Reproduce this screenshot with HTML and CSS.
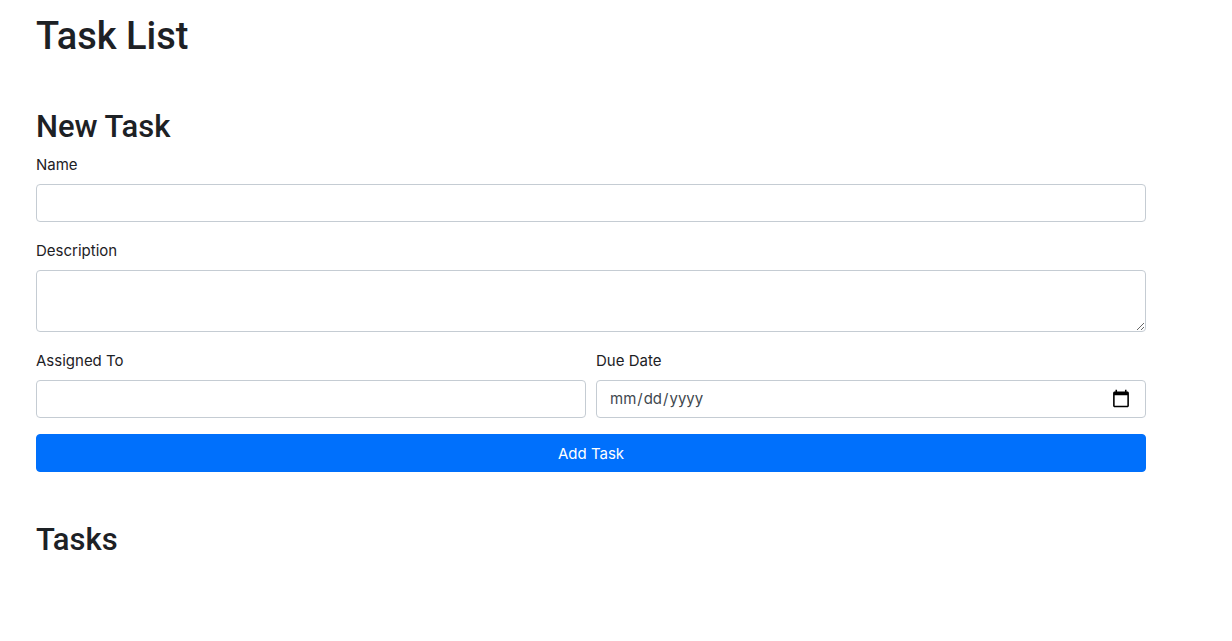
FILE: index.html
```html
<!DOCTYPE html>
<html lang="en">
<head>
<meta charset="utf-8">
<meta name="viewport" content="width=device-width, initial-scale=1">
<title>Task List</title>
<link rel="stylesheet" href="styles.css">
</head>
<body>
<main class="container">
  <h1 class="page-title">Task List</h1>
  <section class="new-task">
    <h2 class="section-title">New Task</h2>
    <form class="task-form">
      <div class="form-group">
        <label for="name">Name</label>
        <input class="form-control" type="text" id="name">
      </div>
      <div class="form-group">
        <label for="description">Description</label>
        <textarea class="form-control" id="description" rows="2"></textarea>
      </div>
      <div class="form-row">
        <div class="form-group">
          <label for="assigned">Assigned To</label>
          <input class="form-control" type="text" id="assigned">
        </div>
        <div class="form-group">
          <label for="due">Due Date</label>
          <input class="form-control" type="date" id="due">
        </div>
      </div>
      <button class="btn" type="submit">Add Task</button>
    </form>
  </section>
  <section class="tasks">
    <h2 class="section-title">Tasks</h2>
  </section>
</main>
</body>
</html>
```
FILE: styles.css
```css
*, *::before, *::after { box-sizing: border-box; }

body {
  margin: 0;
  background: #fff;
  color: #1d2125;
  font-family: Inter, "Liberation Sans", sans-serif;
  font-size: 15px;
  line-height: 24px;
}

.container {
  max-width: 1140px;
  margin: 0 auto 0 21px;
  padding: 11px 15px 0;
}

.page-title,
.section-title {
  font-family: Roboto, "Liberation Sans", sans-serif;
  font-weight: 500;
}

.page-title {
  margin: 0 0 46px;
  font-size: 38px;
  line-height: 50px;
}

.section-title {
  margin: 0 0 5px;
  font-size: 31px;
  line-height: 40px;
}

.form-group {
  flex: 1;
  margin-bottom: 16px;
}

.form-group label {
  display: block;
  margin-bottom: 6px;
  line-height: 26px;
}

.form-row {
  display: flex;
  gap: 10px;
}

.form-control {
  display: block;
  width: 100%;
  height: 38px;
  padding: 6px 12px;
  border: 1px solid #c5ccd3;
  border-radius: 4px;
  background: #fff;
  color: #41484e;
  font: inherit;
}

.form-control::-webkit-calendar-picker-indicator {
  width: 20px;
  height: 20px;
}

textarea.form-control {
  height: auto;
  resize: vertical;
}

.btn {
  display: block;
  width: 100%;
  padding: 7px 12px 5px;
  border: 1px solid #0070fc;
  border-radius: 4px;
  background: #0070fc;
  color: #fff;
  font: inherit;
  cursor: pointer;
}

.tasks {
  margin-top: 48px;
}
```
